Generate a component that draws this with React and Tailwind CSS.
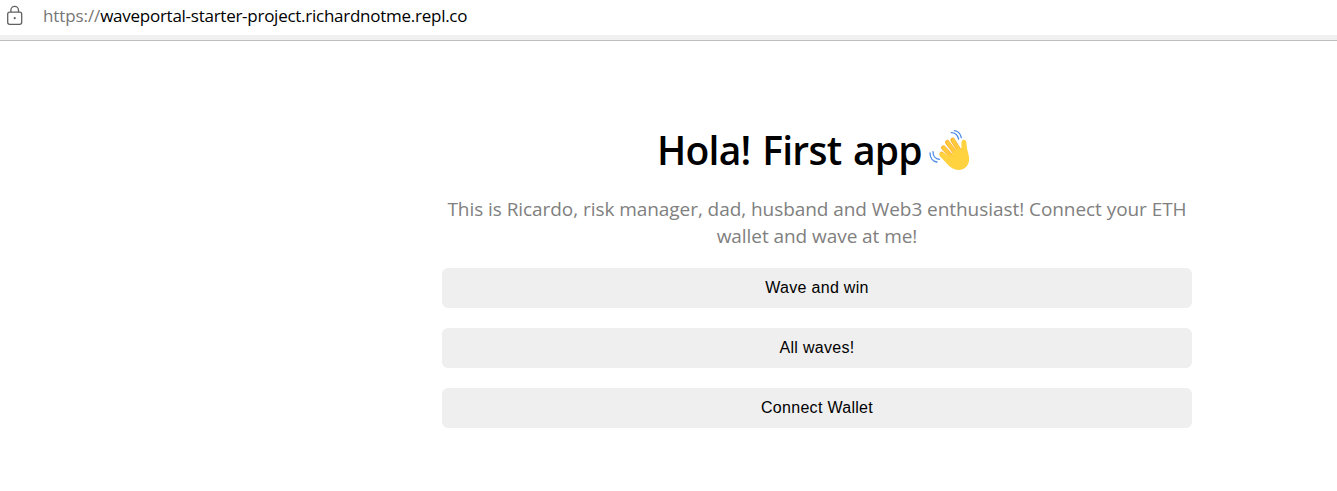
function LockIcon() {
  return (
    <svg className="mt-px h-[22px] w-[18px] shrink-0" viewBox="0 0 18 22" fill="none" stroke="#616161" strokeWidth="1.3">
      <rect x="1.7" y="7.2" width="14" height="12.1" rx="2" />
      <path d="M4.9 7.2V5.1a3.8 3.8 0 0 1 7.6 0v2.1" />
      <circle cx="8.7" cy="13.2" r="1.1" fill="#616161" stroke="none" />
    </svg>
  );
}

function WavingHand() {
  return (
    <svg className="h-[44px] w-[44px] shrink-0" viewBox="0 0 132 132" role="img" aria-label="waving hand">
      <g fill="none" stroke="#fdb436" strokeWidth="14" strokeLinecap="round">
        <path d="M38 78 60 98" />
        <path d="M43 59 68 86" />
        <path d="M55 43 80 76" />
        <path d="M71 36 90 66" />
      </g>
      <g fill="none" stroke="#ffcb3c" strokeWidth="10" strokeLinecap="round">
        <path d="M39 80 60 100" />
        <path d="M45 60 70 90" />
        <path d="M57 44 82 80" />
        <path d="M73 37 92 70" />
      </g>
      <path
        d="M33 75C38 70 48 77 62 87C69 78 77 66 88 60C91 65 94 68 96 64C99 58 96 46 98 40C101 33 110 34 112 42C113 54 114 64 118 77C124 99 119 114 103 123C85 131 69 123 58 112L36 88C31 84 30 79 33 75Z"
        fill="#ffd23f"
      />
      <g fill="none" stroke="#4c8be8" strokeWidth="4" strokeLinecap="round">
        <path d="M76 8C87 9 94 17 97 29" />
        <path d="M67 14C79 14 86 22 89 33" />
        <path d="M3 75C3 89 11 100 24 102" />
        <path d="M12 71C12 84 20 93 31 94" />
      </g>
    </svg>
  );
}

function AddressBar() {
  return (
    <div className="flex h-[41px] items-start border-b border-[#bdbdbd] bg-[#f1f1f1] pb-[5px]">
      <div className="flex h-[35px] w-full items-start bg-white pl-[6px] pt-1">
        <LockIcon />
        <div className="ml-[19px] mt-px w-[424px] whitespace-nowrap font-['Open_Sans',sans-serif] text-[17px] leading-[22px] tracking-[-0.26px] text-black">
          <span className="tracking-[-0.1px] text-[#767676]">https://</span>waveportal-starter-project.richardnotme.repl.co
        </div>
      </div>
    </div>
  );
}

function WaveButton({ children }) {
  return (
    <button className="h-10 w-full rounded-[6px] bg-[#efefef] pb-px font-['Liberation_Sans',Arial,sans-serif] text-base tracking-[0.3px] text-black">
      {children}
    </button>
  );
}

export default function App() {
  return (
    <div className="min-h-[491px] bg-white">
      <AddressBar />
      <main className="ml-[442px] w-[750px] pt-[79px]">
        <h1 className="flex h-[60px] items-center pl-[215px] font-['Open_Sans',sans-serif] text-[39px] font-semibold leading-[60px] text-black">
          <span className="w-[272px] whitespace-nowrap tracking-[-0.75px] [word-spacing:2.2px]">Hola! First app</span>
          <WavingHand />
        </h1>
        <p className="mt-[16px] text-center font-['Open_Sans',sans-serif] text-[19px] leading-[27px] tracking-[-0.06px] text-[#808080]">
          <span className="whitespace-nowrap">This is Ricardo, risk manager, dad, husband and Web3 enthusiast! Connect your ETH</span>
          <br />
          wallet and wave at me!
        </p>
        <div className="mt-[18px] flex flex-col gap-5">
          <WaveButton>Wave and win</WaveButton>
          <WaveButton>All waves!</WaveButton>
          <WaveButton>Connect Wallet</WaveButton>
        </div>
      </main>
    </div>
  );
}
